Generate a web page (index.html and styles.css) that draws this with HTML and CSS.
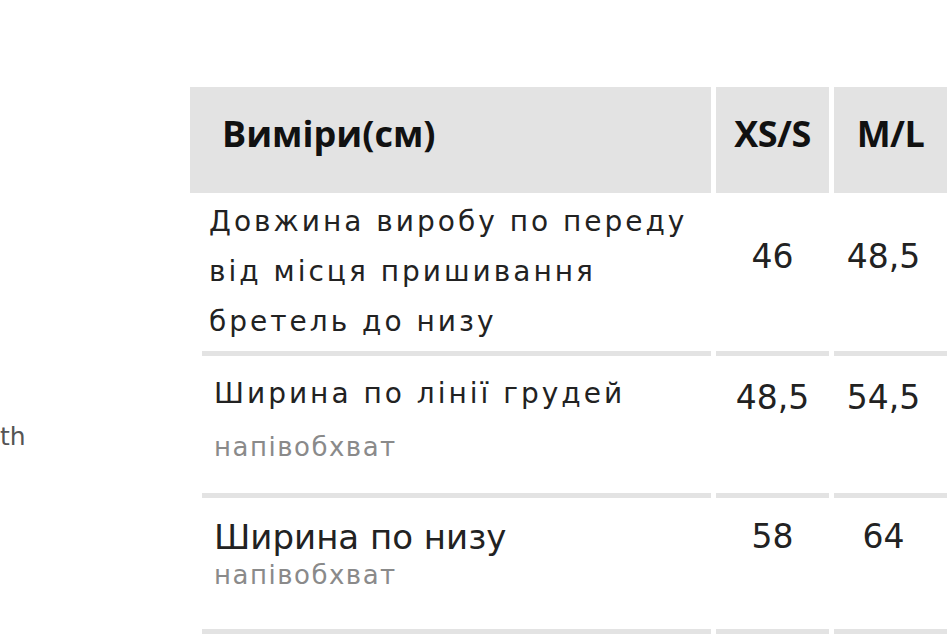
FILE: index.html
```html
<!DOCTYPE html>
<html lang="uk">
<head>
<meta charset="utf-8">
<title>Виміри</title>
<link rel="stylesheet" href="styles.css">
</head>
<body>
<div class="page">
  <aside class="side">
    <div class="side-label">th</div>
  </aside>
  <div class="sizes">
    <div class="head head-name">Виміри(см)</div>
    <div class="head head-size">XS/S</div>
    <div class="head head-size">M/L</div>

    <div class="cell name r1">Довжина виробу по переду від місця пришивання бретель до низу</div>
    <div class="cell val r1v">46</div>
    <div class="cell val val3 r1v">48,5</div>

    <div class="cell name r2">
      <div class="main">Ширина по лінії грудей</div>
      <div class="sub sub2">напівобхват</div>
    </div>
    <div class="cell val r2v">48,5</div>
    <div class="cell val val3 r2v">54,5</div>

    <div class="cell name r3">
      <div class="main main3">Ширина по низу</div>
      <div class="sub sub3">напівобхват</div>
    </div>
    <div class="cell val r3v">58</div>
    <div class="cell val val3 r3v">64</div>
  </div>
</div>
</body>
</html>
```

FILE: styles.css
```css
* { box-sizing: border-box; }

html, body {
  margin: 0;
  padding: 0;
  background: #fff;
  overflow: hidden;
}

body {
  width: 947px;
  height: 641px;
  font-family: "DejaVu Sans", sans-serif;
  color: #222;
}

.page {
  display: flex;
  padding-top: 87px;
}

.side {
  flex: none;
  width: 190px;
}

.side-label {
  margin-top: 335px;
  font-size: 25px;
  line-height: 30px;
  color: #555;
  white-space: nowrap;
}

.sizes {
  flex: none;
  display: grid;
  grid-template-columns: 521px 113px 113px;
  column-gap: 5px;
}

.head {
  height: 106px;
  background: #e3e3e3;
  font-family: "Open Sans", sans-serif;
  font-weight: 700;
  font-size: 36px;
  line-height: 40px;
  color: #111;
  padding-top: 27px;
}

.head-name {
  padding-left: 32px;
}

.head-size {
  text-align: center;
  letter-spacing: -0.5px;
}

.cell {
  border-bottom: 5px solid #e3e3e3;
}

.name {
  margin-left: 12px;
}

.r1 {
  font-size: 28px;
  line-height: 50px;
  letter-spacing: 3px;
  padding: 4px 0 4px 7px;
}

.r2, .r3 {
  padding-left: 12px;
}

.r2 {
  padding-top: 21px;
  padding-bottom: 26px;
}

.r3 {
  padding-top: 19px;
  padding-bottom: 39px;
}

.main {
  font-size: 28px;
  line-height: 34px;
  letter-spacing: 3px;
}

.main3 {
  font-size: 34px;
  line-height: 40px;
  letter-spacing: 0;
}

.sub {
  font-size: 26px;
  letter-spacing: 1.5px;
  color: #8a8a8a;
}

.sub2 {
  line-height: 40px;
  margin-top: 16px;
}

.sub3 {
  line-height: 30px;
  margin-top: 3px;
}

.val {
  text-align: center;
  font-size: 33px;
  line-height: 40px;
  color: #222;
}

.val3 {
  padding-right: 14px;
}

.r1v { padding-top: 44px; }
.r2v { padding-top: 22px; }
.r3v { padding-top: 19px; }
```
